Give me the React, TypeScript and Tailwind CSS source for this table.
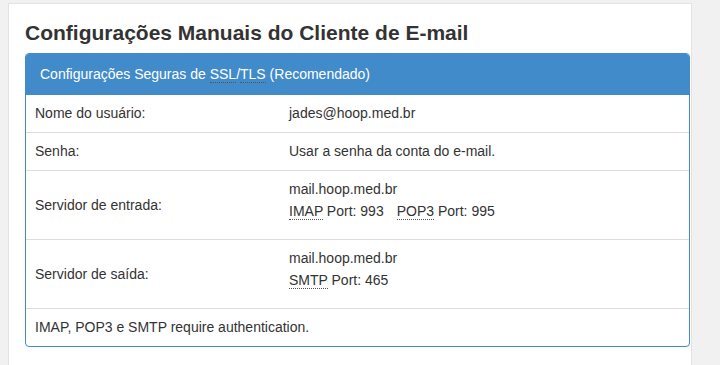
const font = { fontFamily: '"Liberation Sans", Arial, sans-serif' };

function Abbr({ children }: { children: React.ReactNode }) {
  return <span className="border-b border-dotted border-[#555]">{children}</span>;
}

function Row({ label, children, tall }: { label: string; children: React.ReactNode; tall?: boolean }) {
  return (
    <div className={`flex items-center border-b border-[#ddd] ${tall ? 'h-[69px]' : 'h-[38px]'}`}>
      <div className="w-[262px] shrink-0 px-[9px]">{label}</div>
      <div className="px-[1px]">{children}</div>
    </div>
  );
}

export default function App() {
  return (
    <div className="min-h-[365px] w-[720px] bg-[#f1f1f1] pt-[3px] pl-[8px] overflow-hidden text-[14px] text-[#333]" style={font}>
      <div className="w-[684px] h-[370px] border border-[#e3e3e3] bg-white pl-[16px] pt-[16px]">
        <h3 className="text-[21px] font-bold leading-[26px] text-[#333] mb-[7px]">
          Configurações Manuais do Cliente de E-mail
        </h3>
        <div className="w-[665px] rounded-[4px] border border-[#428bca] overflow-hidden bg-white">
          <div className="bg-[#428bca] text-white px-[14px] h-[41px] flex items-center">
            <span>
              Configurações Seguras de <Abbr>SSL</Abbr>/<Abbr>TLS</Abbr> (Recomendado)
            </span>
          </div>
          <Row label="Nome do usuário:">jades@hoop.med.br</Row>
          <Row label="Senha:">Usar a senha da conta do e-mail.</Row>
          <Row label="Servidor de entrada:" tall>
            <div className="leading-[22px] pb-[11px]">
              <div>mail.hoop.med.br</div>
              <div>
                <Abbr>IMAP</Abbr> Port: 993<span className="ml-[13px]"><Abbr>POP3</Abbr> Port: 995</span>
              </div>
            </div>
          </Row>
          <Row label="Servidor de saída:" tall>
            <div className="leading-[22px] pb-[11px]">
              <div>mail.hoop.med.br</div>
              <div>
                <Abbr>SMTP</Abbr> Port: 465
              </div>
            </div>
          </Row>
          <div className="h-[37px] flex items-center px-[9px]">IMAP, POP3 e SMTP require authentication.</div>
        </div>
      </div>
    </div>
  );
}
